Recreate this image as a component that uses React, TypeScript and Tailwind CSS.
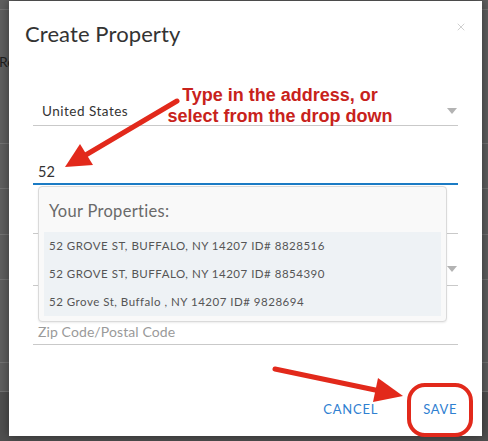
import { X } from 'lucide-react'

const ROWS = [10, 134, 45, 46, 45, 83, 29]

const PROPERTIES = [
  '52 GROVE ST, BUFFALO, NY 14207 ID# 8828516',
  '52 GROVE ST, BUFFALO, NY 14207 ID# 8854390',
  '52 Grove St, Buffalo , NY 14207 ID# 9828694',
]

function Caret() {
  return (
    <svg width="10" height="6" viewBox="0 0 10 6" className="shrink-0">
      <path d="M0 0 L10 0 L5 6 Z" fill="#b3b3b3" />
    </svg>
  )
}

export default function App() {
  return (
    <div className="relative w-[488px] h-[441px] overflow-hidden bg-[#4f4f4f] font-['Lato',sans-serif]">
      {/* page behind the overlay */}
      <div className="flex flex-col bg-[#5f5f5f]">
        {ROWS.map((h, i) => (
          <div
            key={i}
            style={{ height: h }}
            className="border-b border-[#747474] flex items-center"
          >
            {i === 1 && <span className="text-[14px] text-[#1e1e1e] -mt-[30px] -ml-[1px]">Reports</span>}
          </div>
        ))}
      </div>

      {/* modal */}
      <div className="absolute left-[9px] top-[1px] w-[473px] h-[435px] bg-white shadow-[0_0_10px_rgba(0,0,0,0.45)]">
        <button className="absolute left-[446px] top-[20px] text-[#c4c4c4]">
          <X size={12} strokeWidth={1.6} />
        </button>

        <div className="pt-[19px] px-4">
          <h2 className="h-[28px] leading-[28px] text-[22px] text-[#333] tracking-[0.1px]">Create Property</h2>
        </div>

        <div className="px-6 mt-[41px]">
          {/* country */}
          <div className="h-[37px] pt-2 border-b border-[#c9c9c9] flex items-center justify-between pl-[9px] pr-[1px]">
            <span className="text-[13.5px] text-[#333] tracking-[0.5px]">United States</span>
            <Caret />
          </div>

          {/* address with dropdown */}
          <div className="relative">
            <div className="h-[59px] border-b-2 border-[#1b7bc4] flex items-end pl-[5px] pb-[1px]">
              <span className="leading-[20px] text-[14.5px] text-[#333]">52</span>
            </div>

            <div className="absolute left-[5px] top-full mt-[1px] w-[409px] z-10 bg-[#f9f9f9] border border-[#dadada] rounded-[4px] shadow-[0_1px_2px_rgba(0,0,0,0.08)]">
              <div className="h-[45px] pt-[4px] pl-[10px] flex items-center text-[16.5px] tracking-[0.3px] text-[#6a6a6a]">
                Your Properties:
              </div>
              <ul className="mx-[5px] mb-[5px] bg-[#eef2f5]">
                {PROPERTIES.map((p) => (
                  <li
                    key={p}
                    className="h-[28px] pl-[5px] flex items-center text-[11.5px] text-[#555] tracking-[0.5px]"
                  >
                    {p}
                  </li>
                ))}
              </ul>
            </div>
          </div>

          {/* fields hidden under the dropdown */}
          <div className="h-[49px] border-b border-[#c9c9c9]" />
          <div className="h-[52px] pt-[18px] border-b border-[#c9c9c9] flex items-center justify-end pr-[1px]">
            <Caret />
          </div>
          <div className="h-[59px] border-b border-[#c9c9c9] flex items-end pl-[5px] pb-[2px]">
            <span className="leading-[20px] text-[14px] tracking-[0.1px] text-[#9a9a9a]">Zip Code/Postal Code</span>
          </div>

          {/* actions */}
          <div className="mt-[47px] h-[36px] flex items-center justify-end gap-[45px] pr-[1px]">
            <button className="text-[13px] tracking-[0.8px] text-[#2f80d1]">CANCEL</button>
            <button className="text-[13px] tracking-[0.6px] text-[#2f80d1]">SAVE</button>
          </div>
        </div>
      </div>

      {/* annotation text */}
      <div className="absolute left-[167px] top-[85px] w-[226px] text-center font-['Liberation_Sans',Arial,sans-serif] font-bold text-[18px] leading-[21px] text-[#c8221b]">
        Type in the address, or
        <br />
        select from the drop down
      </div>

      {/* annotation arrows */}
      <svg className="absolute inset-0 pointer-events-none" width="488" height="441" viewBox="0 0 488 441">
        <line x1="177" y1="101" x2="84" y2="156" stroke="#e2291b" strokeWidth="5" strokeLinecap="round" />
        <polygon points="65,167 80,144 93,165" fill="#e2291b" />
        <line x1="275" y1="369" x2="380" y2="391" stroke="#e2291b" strokeWidth="5" strokeLinecap="round" />
        <polygon points="403,396 378,378 373,402" fill="#e2291b" />
        <rect x="409" y="385" width="62" height="50" rx="16" fill="none" stroke="#e2291b" strokeWidth="4" />
      </svg>
    </div>
  )
}
